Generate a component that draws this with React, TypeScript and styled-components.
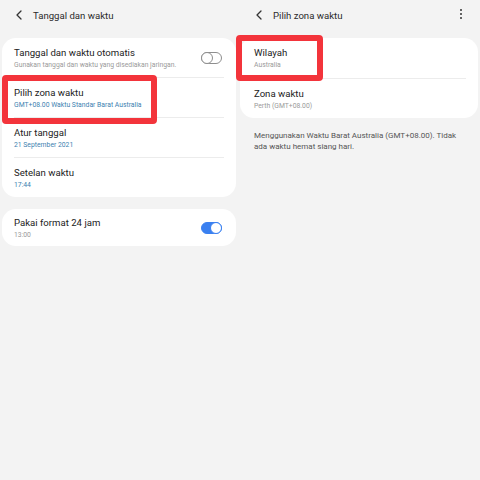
import React from "react";
import styled, { createGlobalStyle } from "styled-components";

const Global = createGlobalStyle`
  html, body { margin: 0; padding: 0; background: #f3f3f3; }
  body { font-family: Roboto, "Noto Sans", Arial, sans-serif; }
`;

const Screen = styled.div`
  display: flex;
  width: 480px;
  height: 480px;
  background: #f3f3f3;
  overflow: hidden;
`;

const Panel = styled.div<{ $pl: number; $pr: number }>`
  position: relative;
  width: 240px;
  box-sizing: border-box;
  padding: 0 ${(p) => p.$pr}px 0 ${(p) => p.$pl}px;
  display: flex;
  flex-direction: column;
`;

const Header = styled.div<{ $indent: number }>`
  height: 30px;
  margin-bottom: 8px;
  display: flex;
  align-items: center;
  padding-left: ${(p) => p.$indent}px;
  position: relative;
`;

const Back = styled.svg`
  width: 8px;
  height: 10px;
  margin-right: 10px;
`;

const HeaderTitle = styled.div`
  font-size: 9.6px;
  color: #2b2b2b;
`;

const More = styled.div`
  position: absolute;
  right: 16px;
  top: 9px;
  display: flex;
  flex-direction: column;
  gap: 2px;
`;

const Dot = styled.span`
  width: 2px;
  height: 2px;
  border-radius: 50%;
  background: #333;
`;

const Card = styled.div<{ $mb?: number }>`
  background: #ffffff;
  border-radius: 14px;
  margin-bottom: ${(p) => p.$mb ?? 0}px;
  overflow: hidden;
`;

const Row = styled.div<{ $pad: number; $h: number }>`
  height: ${(p) => p.$h}px;
  box-sizing: border-box;
  padding: 0 12px 0 ${(p) => p.$pad}px;
  display: flex;
  align-items: center;
  position: relative;
`;

const Divider = styled.div<{ $pad: number }>`
  height: 1px;
  background: #ececec;
  margin: 0 12px 0 ${(p) => p.$pad}px;
`;

const Texts = styled.div`
  flex: 1;
  display: flex;
  flex-direction: column;
  gap: 2px;
`;

const Title = styled.div`
  font-size: 9.6px;
  color: #222;
  line-height: 12px;
`;

const Sub = styled.div<{ $blue?: boolean }>`
  font-size: 6.8px;
  line-height: 8px;
  color: ${(p) => (p.$blue ? "#3d7fb0" : "#9a9a9a")};
`;

const SwitchTrack = styled.div<{ $on?: boolean }>`
  width: 21px;
  height: 12px;
  border-radius: 6px;
  box-sizing: border-box;
  border: 1px solid ${(p) => (p.$on ? "#3a80f0" : "#8e8e8e")};
  background: ${(p) => (p.$on ? "#3a80f0" : "#fff")};
  position: relative;
  margin-right: 2px;
`;

const Knob = styled.div<{ $on?: boolean }>`
  position: absolute;
  top: -1px;
  ${(p) => (p.$on ? "right: -1px;" : "left: -1px;")}
  width: 12px;
  height: 12px;
  box-sizing: border-box;
  border-radius: 50%;
  background: #fff;
  border: 1px solid ${(p) => (p.$on ? "#3a80f0" : "#8e8e8e")};
`;

const Note = styled.div`
  font-size: 8px;
  line-height: 11px;
  color: #555;
  padding: 12px 14px 0 14px;
`;

const Highlight = styled.div<{ $x: number; $y: number; $w: number; $h: number }>`
  position: absolute;
  left: ${(p) => p.$x}px;
  top: ${(p) => p.$y}px;
  width: ${(p) => p.$w}px;
  height: ${(p) => p.$h}px;
  box-sizing: border-box;
  border: 6px solid #f3343b;
  border-radius: 4px;
  pointer-events: none;
`;

const BackIcon = () => (
  <Back viewBox="0 0 8 10">
    <path d="M6 1 L2 5 L6 9" fill="none" stroke="#333" strokeWidth="1.3" strokeLinecap="round" strokeLinejoin="round" />
  </Back>
);

export default function App() {
  return (
    <>
      <Global />
      <Screen>
        <Panel $pl={2} $pr={4}>
          <Header $indent={13}>
            <BackIcon />
            <HeaderTitle>Tanggal dan waktu</HeaderTitle>
          </Header>
          <Card $mb={12}>
            <Row $pad={12} $h={39}>
              <Texts>
                <Title>Tanggal dan waktu otomatis</Title>
                <Sub>Gunakan tanggal dan waktu yang disediakan jaringan.</Sub>
              </Texts>
              <SwitchTrack>
                <Knob />
              </SwitchTrack>
            </Row>
            <Divider $pad={12} />
            <Row $pad={12} $h={39}>
              <Texts>
                <Title>Pilih zona waktu</Title>
                <Sub $blue>GMT+08.00 Waktu Standar Barat Australia</Sub>
              </Texts>
            </Row>
            <Divider $pad={12} />
            <Row $pad={12} $h={39}>
              <Texts>
                <Title>Atur tanggal</Title>
                <Sub $blue>21 September 2021</Sub>
              </Texts>
            </Row>
            <Divider $pad={12} />
            <Row $pad={12} $h={39}>
              <Texts>
                <Title>Setelan waktu</Title>
                <Sub $blue>17:44</Sub>
              </Texts>
            </Row>
          </Card>
          <Card>
            <Row $pad={12} $h={37}>
              <Texts>
                <Title>Pakai format 24 jam</Title>
                <Sub>13:00</Sub>
              </Texts>
              <SwitchTrack $on>
                <Knob $on />
              </SwitchTrack>
            </Row>
          </Card>
          <Highlight $x={2} $y={75} $w={155} $h={49} />
        </Panel>
        <Panel $pl={0} $pr={2}>
          <Header $indent={15}>
            <BackIcon />
            <HeaderTitle>Pilih zona waktu</HeaderTitle>
            <More>
              <Dot />
              <Dot />
              <Dot />
            </More>
          </Header>
          <Card>
            <Row $pad={14} $h={40}>
              <Texts>
                <Title>Wilayah</Title>
                <Sub>Australia</Sub>
              </Texts>
            </Row>
            <Divider $pad={14} />
            <Row $pad={14} $h={39}>
              <Texts>
                <Title>Zona waktu</Title>
                <Sub>Perth (GMT+08.00)</Sub>
              </Texts>
            </Row>
          </Card>
          <Note>Menggunakan Waktu Barat Australia (GMT+08.00). Tidak ada waktu hemat siang hari.</Note>
          <Highlight $x={-4} $y={35} $w={87} $h={46} />
        </Panel>
      </Screen>
    </>
  );
}
